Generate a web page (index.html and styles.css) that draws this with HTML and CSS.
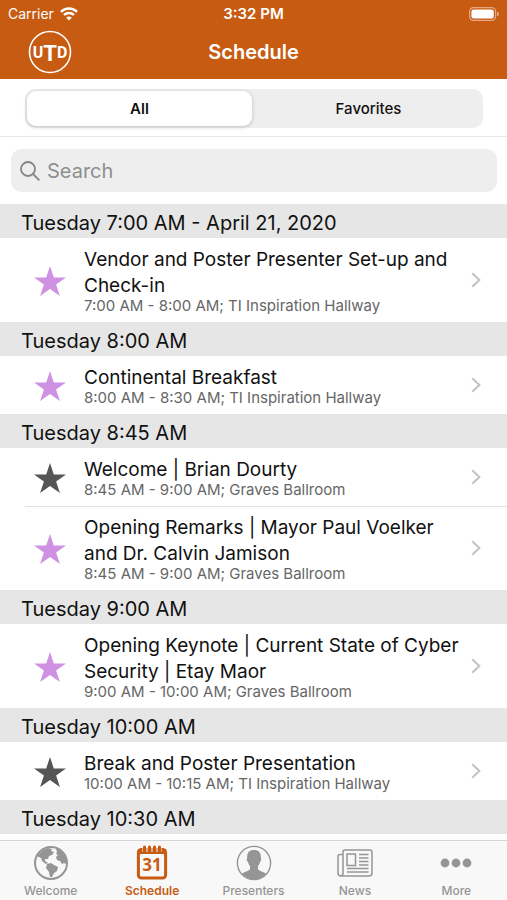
FILE: index.html
```html
<!DOCTYPE html>
<html lang="en">
<head>
    <meta charset="UTF-8">
    <meta name="viewport" content="width=device-width, initial-scale=1.0">
    <title>Schedule</title>
    <link rel="stylesheet" href="styles.css">
</head>
<body>
    <!-- Shared icons -->
    <svg class="sprite" aria-hidden="true">
        <symbol id="star" viewBox="0 0 32 30">
            <path d="M16 0l3.8 11.4H32l-9.9 7.1L25.9 30 16 22.9 6.1 30l3.8-11.5L0 11.4h12.2z"/>
        </symbol>
        <symbol id="chevron" viewBox="0 0 10 16">
            <path d="M1.2 1.2L8.4 8l-7.2 6.8" fill="none" stroke="currentColor" stroke-width="2"/>
        </symbol>
    </svg>

    <!-- Header -->
    <header>
        <div class="status">
            <div class="carrier">
                <span>Carrier</span>
                <svg width="18" height="14" viewBox="0 0 18 14" fill="none" stroke="#fff" stroke-width="2.4" aria-hidden="true">
                    <path d="M1 4.8a11.4 11.4 0 0 1 16 0"/>
                    <path d="M4 8a7.2 7.2 0 0 1 10 0"/>
                    <path d="M9 13.6L6.2 10.8a4 4 0 0 1 5.6 0z" fill="#fff" stroke="none"/>
                </svg>
            </div>
            <span class="clock">3:32 PM</span>
            <svg class="battery" width="30" height="14" viewBox="0 0 30 14" aria-hidden="true">
                <rect x=".6" y=".6" width="26" height="12.8" rx="4" fill="none" stroke="#e5a883" stroke-width="1.2"/>
                <rect x="2.4" y="2.4" width="22.4" height="9.2" rx="2.4" fill="#fff"/>
                <path d="M28 4.6q2 .8 2 2.4t-2 2.4z" fill="#e5a883"/>
            </svg>
        </div>
        <div class="titlebar">
            <svg class="logo" width="44" height="44" viewBox="0 0 44 44" role="img" aria-label="UTD">
                <circle cx="22" cy="22" r="20.5"/>
                <text x="22" y="28">U<tspan class="logo-t" dy="3">T</tspan><tspan dy="-3">D</tspan></text>
            </svg>
            <h1>Schedule</h1>
        </div>
    </header>

    <!-- Filter and search -->
    <div class="filter">
        <div class="segments">
            <input type="radio" name="filter" id="all" checked>
            <label for="all">All</label>
            <input type="radio" name="filter" id="favorites">
            <label for="favorites">Favorites</label>
        </div>
    </div>
    <div class="search">
        <label for="search" aria-label="Search">
            <svg width="20" height="20" viewBox="0 0 20 20" fill="none" stroke="#858585" stroke-width="1.8" aria-hidden="true">
                <circle cx="8" cy="8" r="7"/>
                <path d="M13 13l6.4 6.4"/>
            </svg>
        </label>
        <input type="text" id="search" placeholder="Search">
    </div>

    <!-- Schedule -->
    <main>
        <h2>Tuesday 7:00 AM - April 21, 2020</h2>
        <ul>
            <li>
                <button class="star favorite" aria-label="Favorite"><svg><use href="#star"/></svg></button>
                <a href="#">
                    <span class="info">
                        <strong>Vendor and Poster Presenter Set-up and Check-in</strong>
                        <small>7:00 AM - 8:00 AM; TI Inspiration Hallway</small>
                    </span>
                    <svg class="chevron"><use href="#chevron"/></svg>
                </a>
            </li>
        </ul>
        <h2>Tuesday 8:00 AM</h2>
        <ul>
            <li>
                <button class="star favorite" aria-label="Favorite"><svg><use href="#star"/></svg></button>
                <a href="#">
                    <span class="info">
                        <strong>Continental Breakfast</strong>
                        <small>8:00 AM - 8:30 AM; TI Inspiration Hallway</small>
                    </span>
                    <svg class="chevron"><use href="#chevron"/></svg>
                </a>
            </li>
        </ul>
        <h2>Tuesday 8:45 AM</h2>
        <ul>
            <li>
                <button class="star" aria-label="Favorite"><svg><use href="#star"/></svg></button>
                <a href="#">
                    <span class="info">
                        <strong>Welcome | Brian Dourty</strong>
                        <small>8:45 AM - 9:00 AM; Graves Ballroom</small>
                    </span>
                    <svg class="chevron"><use href="#chevron"/></svg>
                </a>
            </li>
            <li>
                <button class="star favorite" aria-label="Favorite"><svg><use href="#star"/></svg></button>
                <a href="#">
                    <span class="info">
                        <strong>Opening Remarks | Mayor Paul Voelker and Dr. Calvin Jamison</strong>
                        <small>8:45 AM - 9:00 AM; Graves Ballroom</small>
                    </span>
                    <svg class="chevron"><use href="#chevron"/></svg>
                </a>
            </li>
        </ul>
        <h2>Tuesday 9:00 AM</h2>
        <ul>
            <li>
                <button class="star favorite" aria-label="Favorite"><svg><use href="#star"/></svg></button>
                <a href="#">
                    <span class="info">
                        <strong>Opening Keynote | Current State of Cyber Security | Etay Maor</strong>
                        <small>9:00 AM - 10:00 AM; Graves Ballroom</small>
                    </span>
                    <svg class="chevron"><use href="#chevron"/></svg>
                </a>
            </li>
        </ul>
        <h2>Tuesday 10:00 AM</h2>
        <ul>
            <li>
                <button class="star" aria-label="Favorite"><svg><use href="#star"/></svg></button>
                <a href="#">
                    <span class="info">
                        <strong>Break and Poster Presentation</strong>
                        <small>10:00 AM - 10:15 AM; TI Inspiration Hallway</small>
                    </span>
                    <svg class="chevron"><use href="#chevron"/></svg>
                </a>
            </li>
        </ul>
        <h2>Tuesday 10:30 AM</h2>
    </main>

    <!-- Tab Bar -->
    <nav>
        <a href="#">
            <svg width="36" height="36" viewBox="0 0 36 36" aria-hidden="true">
                <circle cx="18" cy="18" r="16" fill="none" stroke="currentColor" stroke-width="2"/>
                <path fill="currentColor" d="M6 9l4-4 5-2 4 1-1 2 3 1-2 3-3 1-1 3-3 0 0 2 3 2-2 1-4-3-1-3-4-2z"/>
                <path fill="currentColor" d="M14 19l4-1 3 2 4 2-1 4-3 2-2 4-2 0-1-5-3-4z"/>
                <path fill="currentColor" d="M23 4l3 0 4 4 3 6 0 5-2-1-2 1-2-3-3-1-1-3 2-2-2-1 1-2z"/>
            </svg>
            <span>Welcome</span>
        </a>
        <a href="#" class="active" aria-current="page">
            <svg width="36" height="36" viewBox="0 0 36 36" aria-hidden="true">
                <rect x="4.400" y="4.400" width="27.200" height="28.600" rx="3" fill="none" stroke="currentColor" stroke-width="3"/>
                <path fill="currentColor" d="M4 4h28v5H4z"/>
                <path d="M10.500 0v7M15.500 0v7M20.500 0v7M25.500 0v7" stroke="#f8f8f8" stroke-width="4"/>
                <path d="M10.500 2v5M15.500 2v5M20.500 2v5M25.500 2v5" stroke="currentColor" stroke-width="3" stroke-linecap="round"/>
                <text x="18" y="26" class="day">31</text>
            </svg>
            <span>Schedule</span>
        </a>
        <a href="#">
            <svg width="36" height="36" viewBox="0 0 36 36" aria-hidden="true">
                <circle cx="18" cy="18" r="16.600" fill="none" stroke="currentColor" stroke-width="1.400"/>
                <path fill="currentColor" d="M18 5c5 0 7.200 3 6.800 8 .8.6.4 3.400-.8 4-.4 2-1.200 3.200-2 4v3c1 2.200 5 2.600 8 4.600C27 32.600 23 34.600 18 34.600S9 32.600 6 28.600c3-2 7-2.400 8-4.600v-3c-.8-.8-1.600-2-2-4-1.200-.6-1.600-3.400-.8-4C10.800 8 13 5 18 5z"/>
            </svg>
            <span>Presenters</span>
        </a>
        <a href="#">
            <svg width="36" height="36" viewBox="0 0 36 36" fill="none" stroke="currentColor" stroke-width="1.500" aria-hidden="true">
                <path d="M6 9.500H3q-2 0-2 2V28q0 3 3 3h28q3 0 3-3V7q0-2-2-2H8Q6 5 6 7v21q0 3-2.500 3"/>
                <rect x="10" y="9" width="8.500" height="11.500"/>
                <path d="M22 9.500h9.500M22 13h9.500M22 16.500h9.500M22 20h9.500M10 23.500h21.500M10 27h21.500"/>
            </svg>
            <span>News</span>
        </a>
        <a href="#">
            <svg width="36" height="36" viewBox="0 0 36 36" fill="currentColor" aria-hidden="true">
                <circle cx="7" cy="18" r="4.400"/>
                <circle cx="18" cy="18" r="4.400"/>
                <circle cx="29" cy="18" r="4.400"/>
            </svg>
            <span>More</span>
        </a>
    </nav>
</body>
</html>
```

FILE: styles.css
```css
* {
    box-sizing: border-box;
}
body {
    font-family: Inter, "Liberation Sans", sans-serif;
    margin: 0;
    height: 100vh;
    display: flex;
    flex-direction: column;
    background-color: #fff;
    color: #111;
}
header, .filter, .search, nav {
    flex-shrink: 0;
}
.sprite {
    display: none;
}
header {
    background-color: #c75b12;
    color: #fff;
}
.status {
    display: grid;
    grid-template-columns: 1fr auto 1fr;
    align-items: center;
    height: 27px;
    padding: 0 8px;
    font-size: 14px;
}
.carrier {
    display: flex;
    align-items: center;
    gap: 6px;
}
.clock {
    font-size: 15px;
    font-weight: 600;
}
.battery {
    justify-self: end;
}
.titlebar {
    display: grid;
    grid-template-columns: 1fr auto 1fr;
    align-items: center;
    height: 52px;
    padding: 0 28px 2px;
}
.logo circle {
    fill: none;
    stroke: #fff;
    stroke-width: 1.6;
}
.logo text {
    font-family: Roboto, sans-serif;
    font-size: 16px;
    font-weight: bold;
    text-anchor: middle;
    fill: #fff;
}
.logo .logo-t {
    font-size: 22px;
}
h1 {
    margin: 0;
    font-size: 20px;
    font-weight: 600;
}
.filter {
    padding: 10px 24px 8px 25px;
    border-bottom: 1px solid #e6e6e6;
}
.segments {
    display: flex;
    gap: 4px;
    height: 39px;
    padding: 2px;
    border-radius: 10px;
    background-color: #eee;
}
.segments input {
    position: absolute;
    opacity: 0;
}
.segments label {
    flex: 1;
    display: flex;
    align-items: center;
    justify-content: center;
    border-radius: 9px;
    font-size: 15px;
    font-weight: 500;
}
.segments input:checked + label {
    background-color: #fff;
    font-weight: 600;
    box-shadow: 0 1px 4px rgba(0, 0, 0, 0.2);
}
.search {
    display: flex;
    align-items: center;
    gap: 7px;
    height: 43px;
    margin: 12px 10px 12px 11px;
    padding: 0 9px;
    border-radius: 11px;
    background-color: #eee;
}
.search label {
    display: flex;
}
.search input {
    flex: 1;
    min-width: 0;
    padding: 0;
    border: 0;
    outline: 0;
    background: none;
    font: inherit;
    font-size: 20px;
}
.search input::placeholder {
    color: #8e8e8e;
    opacity: 1;
}
main {
    flex: 1;
    min-height: 0;
    overflow: hidden;
}
h2 {
    margin: 0;
    padding: 4px 21px 0;
    background-color: #e6e6e6;
    font-size: 20px;
    font-weight: 400;
    line-height: 30px;
}
ul {
    margin: 0;
    padding: 0;
    list-style: none;
}
li {
    display: flex;
    align-items: center;
}
li + li {
    background: linear-gradient(#e2e2e2, #e2e2e2) 25px 0 / 100% 1px no-repeat;
}
.star {
    margin: 0 18px 0 34px;
    padding: 2px 0 0;
    border: 0;
    background: none;
    color: #555;
}
.star svg {
    display: block;
    width: 32px;
    height: 30px;
    fill: currentColor;
}
.favorite {
    color: #cf91e2;
}
li a {
    flex: 1;
    display: flex;
    align-items: center;
    justify-content: space-between;
    gap: 8px;
    padding: 9px 26px 9px 0;
    color: inherit;
    text-decoration: none;
}
.info strong, .info small {
    display: block;
}
.info strong {
    font-size: 19px;
    font-weight: 400;
    line-height: 26px;
}
.info small {
    color: #666;
    font-size: 15px;
    line-height: 14px;
}
.chevron {
    flex-shrink: 0;
    width: 10px;
    height: 16px;
    color: #c3c3c3;
}
nav {
    display: flex;
    height: 60px;
    border-top: 1px solid #d5d5d5;
    background-color: #f8f8f8;
}
nav a {
    flex: 1;
    display: flex;
    flex-direction: column;
    align-items: center;
    gap: 3px;
    padding-top: 4px;
    color: #959595;
    font-size: 12px;
    font-weight: 500;
    line-height: 14px;
    text-decoration: none;
}
nav .active {
    color: #c75b12;
    font-weight: 600;
}
.day {
    fill: currentColor;
    font-family: "Open Sans", sans-serif;
    font-size: 17px;
    font-weight: bold;
    text-anchor: middle;
}
```
